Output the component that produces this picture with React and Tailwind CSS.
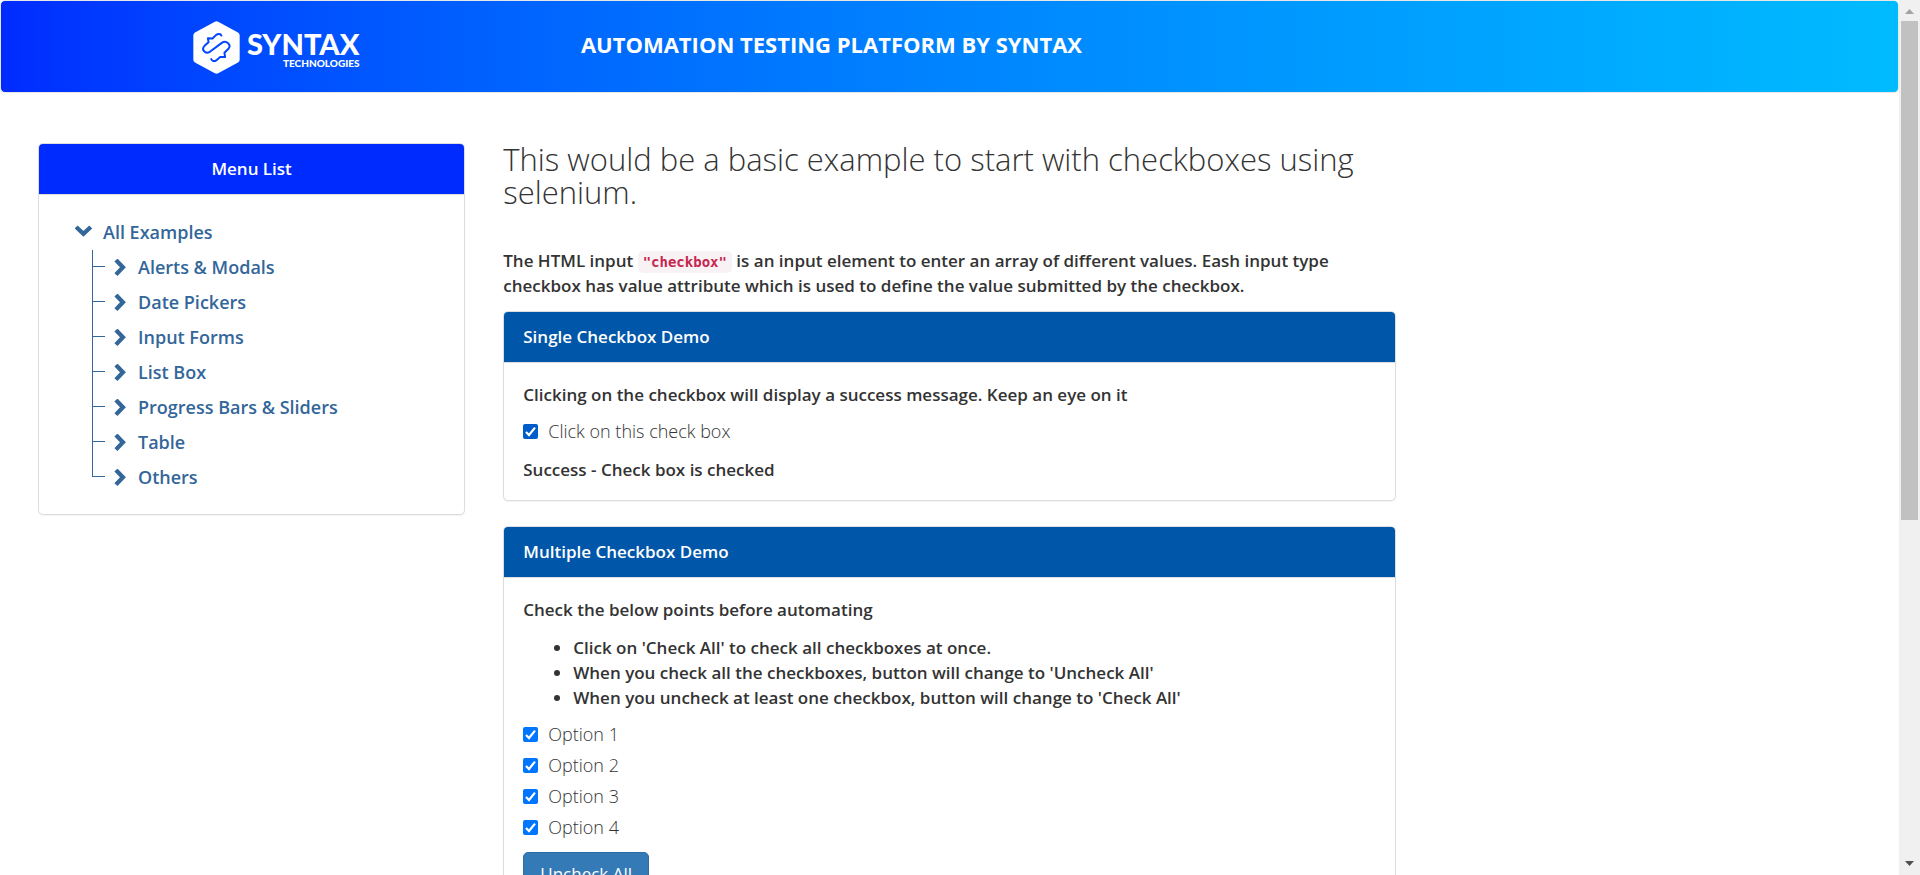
import React, { useState } from 'react';

const MENU = ['Alerts & Modals', 'Date Pickers', 'Input Forms', 'List Box', 'Progress Bars & Sliders', 'Table', 'Others'];
const OPTIONS = ['Option 1', 'Option 2', 'Option 3', 'Option 4'];

function LogoMark() {
  return (
    <svg viewBox="8 8 142 160" className="h-[53px] w-[47px]" fill="none" aria-hidden="true">
      <path d="M74 10 Q79 7 84 10 L144 43 Q149 46 149 51 V125 Q149 130 144 133 L84 166 Q79 169 74 166 L14 133 Q9 130 9 125 V51 Q9 46 14 43 Z" fill="#fff" />
      <path
        d="M94 52 C91 46 83 46 78 50 L67 61 L53 60 L55 72 L43 83 C32 94 44 109 59 101 L95 74 C109 65 125 80 115 92 L103 104 L105 117 L90 117 L78 127 C72 131 66 129 63 123"
        stroke="#0046ff"
        strokeWidth="6"
        strokeLinecap="round"
        strokeLinejoin="round"
      />
    </svg>
  );
}

function Chevron({ down }) {
  return (
    <svg viewBox="0 0 16 16" className="size-[18px] shrink-0" fill="none" stroke="currentColor" strokeWidth="3.8" aria-hidden="true">
      <path d={down ? 'M1 2.6 L7.5 8.8 L14 2.6' : 'M4.4 0.9 L10.6 7.4 L4.4 13.9'} />
    </svg>
  );
}

function Panel({ title, headClass, bodyClass, children }) {
  return (
    <section className="overflow-hidden rounded-[5px] border border-[#dddddd] bg-white shadow-[0_1px_1px_rgba(0,0,0,0.05)]">
      <h2 className={'border-b border-[#dddddd] px-[19px] py-3 text-[17px] leading-[26px] font-semibold text-white ' + headClass}>{title}</h2>
      <div className={bodyClass}>{children}</div>
    </section>
  );
}

function CheckRow({ label, checked, onChange, tone }) {
  return (
    <label className="flex items-center gap-[10px] text-[18px] leading-[25px] font-light">
      <span className="relative flex size-[15px]">
        <input
          type="checkbox"
          checked={checked}
          onChange={onChange}
          className={'size-[15px] appearance-none rounded-[2px] border border-[#767676] bg-white checked:border-0 ' + tone}
        />
        {checked && (
          <svg viewBox="0 0 15 15" className="pointer-events-none absolute inset-0" fill="none" stroke="#fff" strokeWidth="2.2" aria-hidden="true">
            <path d="M3 8 L6 11 L12 3.6" />
          </svg>
        )}
      </span>
      {label}
    </label>
  );
}

export default function App() {
  const [single, setSingle] = useState(true);
  const [options, setOptions] = useState([true, true, true, true]);
  const all = options.every(Boolean);

  return (
    <div className="flex h-screen overflow-hidden bg-white font-['Open_Sans',sans-serif] text-[17px] leading-[25px] font-semibold text-[#333333]">
      <div className="min-w-0 flex-1 overflow-hidden">
        <header className="flex items-start rounded-[5px] border border-[#e7e7e7] bg-linear-to-r from-[#002bff] via-[#0084ff] to-[#00bbff] pt-5 pb-[18px] pl-[10%] text-white">
          <a href="#home" className="flex w-[390px] items-center gap-[7px] pl-[2px]">
            <LogoMark />
            <span className="flex flex-col items-end pt-[2px] font-['Lato',sans-serif] font-black">
              <span className="text-[29px] leading-7">SYNTAX</span>
              <span className="text-[10px] leading-[10px]">TECHNOLOGIES</span>
            </span>
          </a>
          <h1 className="mt-[9px] text-[22px] leading-7 font-bold">AUTOMATION TESTING PLATFORM BY SYNTAX</h1>
        </header>

        <div className="grid grid-cols-4 items-start gap-[38px] px-[38px] pt-[50px]">
          <Panel title="Menu List" headClass="bg-[#002bff] text-center" bodyClass="px-9 pt-5 pb-[19px]">
            <nav className="text-[18px] leading-[35px] text-[#336699]">
              <a href="#all" className="flex items-center gap-[10px]">
                <Chevron down />
                All Examples
              </a>
              <ul className="pl-[17px]">
                {MENU.map((name) => (
                  <li key={name} className="group flex">
                    <span className="flex h-[35px] w-px flex-col">
                      <span className="h-[17px] w-px bg-[#336699]" />
                      <span className="flex-1 bg-[#336699] group-last:bg-transparent" />
                    </span>
                    <span className="mt-4 h-px w-3 bg-[#336699]" />
                    <a href="#menu" className="ml-[6px] flex items-center gap-[9px]">
                      <Chevron />
                      {name}
                    </a>
                  </li>
                ))}
              </ul>
            </nav>
          </Panel>

          <main className="col-span-2">
            <h2 className="mb-[39px] text-[31px] leading-[33px] font-light">
              This would be a basic example to start with checkboxes using selenium.
            </h2>
            <p className="mb-[13px]">
              The HTML input{' '}
              <code className="rounded-[5px] bg-[#f9f2f4] px-[5px] py-[3px] font-['DejaVu_Sans_Mono',monospace] text-[14px] leading-4 font-bold text-[#c7254e]">"checkbox"</code>{' '}
              is an input element to enter an array of different values. Eash input type checkbox has value attribute which is used to define the value submitted by the checkbox.
            </p>

            <div className="flex flex-col gap-[25px]">
              <Panel title="Single Checkbox Demo" headClass="bg-[#0056a9]" bodyClass="px-[19px] pt-[19px] pb-[18px]">
                <p className="mb-3">Clicking on the checkbox will display a success message. Keep an eye on it</p>
                <CheckRow label="Click on this check box" checked={single} onChange={() => setSingle(!single)} tone="checked:bg-[#005cc8]" />
                <p className="mt-[13px]">{single ? 'Success - Check box is checked' : ''}</p>
              </Panel>

              <Panel title="Multiple Checkbox Demo" headClass="bg-[#0056a9]" bodyClass="px-[19px] pt-[19px] pb-[18px]">
                <p className="mb-[13px]">Check the below points before automating</p>
                <ul className="mb-3 list-disc pl-[50px]">
                  <li>Click on 'Check All' to check all checkboxes at once.</li>
                  <li>When you check all the checkboxes, button will change to 'Uncheck All'</li>
                  <li>When you uncheck at least one checkbox, button will change to 'Check All'</li>
                </ul>
                <div className="mb-3 flex flex-col gap-[6px]">
                  {OPTIONS.map((name, i) => (
                    <CheckRow
                      key={name}
                      label={name}
                      checked={options[i]}
                      onChange={() => setOptions(options.map((v, j) => (j === i ? !v : v)))}
                      tone="checked:bg-[#0075ff]"
                    />
                  ))}
                </div>
                <button
                  type="button"
                  onClick={() => setOptions(options.map(() => !all))}
                  className="rounded-[5px] border border-[#2e6da4] bg-[#337ab7] px-4 py-2 font-normal text-white"
                >
                  {all ? 'Uncheck All' : 'Check All'}
                </button>
              </Panel>
            </div>
          </main>
        </div>
      </div>

      <div className="flex w-[21px] shrink-0 flex-col items-center bg-[#f0f0f0]" aria-hidden="true">
        <svg viewBox="0 0 21 21" className="size-[21px] shrink-0" fill="#a3a3a3">
          <path d="M6 14 L10.5 9 L15 14 Z" />
        </svg>
        <span className="h-[57%] w-[17px] bg-[#c1c1c1]" />
        <svg viewBox="0 0 21 21" className="mt-auto size-[21px] shrink-0" fill="#505050">
          <path d="M6 7 L10.5 12 L15 7 Z" />
        </svg>
      </div>
    </div>
  );
}
